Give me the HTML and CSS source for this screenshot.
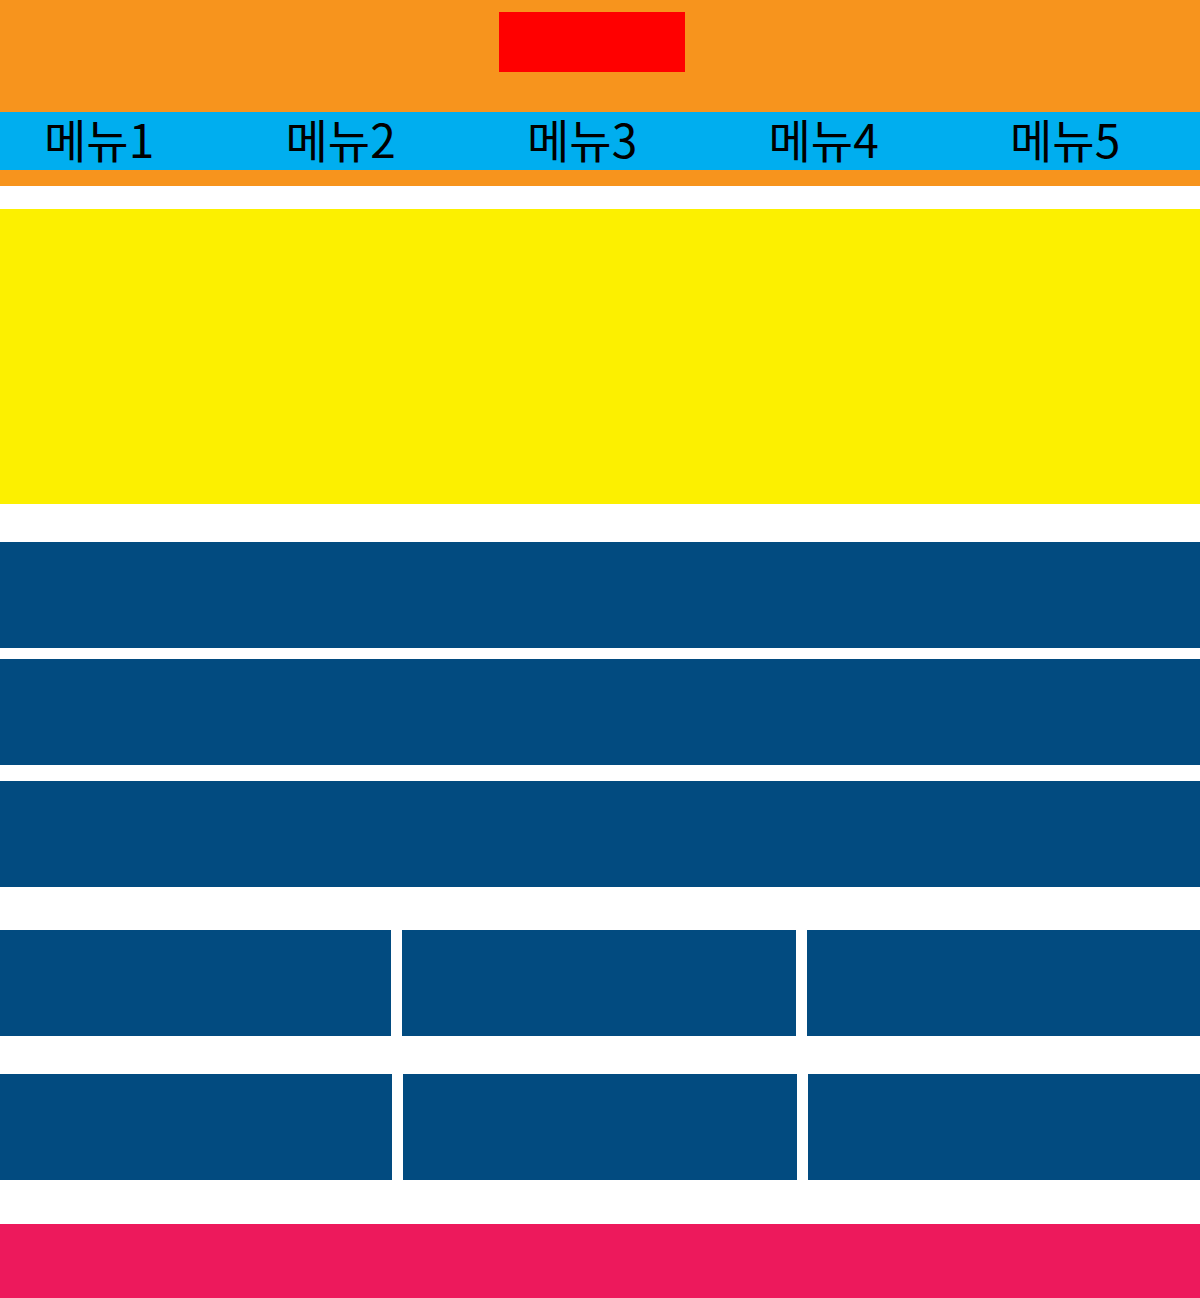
FILE: index.html
```html
<!DOCTYPE html>
<html lang="ko">
<head>
<meta charset="utf-8">
<title>Layout</title>
<link rel="stylesheet" href="styles.css">
</head>
<body>
<header class="site-header">
  <div class="logo"></div>
  <nav class="gnb">
    <ul class="gnb-list">
      <li class="gnb-item">메뉴1</li>
      <li class="gnb-item">메뉴2</li>
      <li class="gnb-item">메뉴3</li>
      <li class="gnb-item">메뉴4</li>
      <li class="gnb-item">메뉴5</li>
    </ul>
  </nav>
</header>
<main class="content">
  <section class="visual"></section>
  <section class="bars">
    <div class="bar bar-1"></div>
    <div class="bar bar-2"></div>
    <div class="bar bar-3"></div>
  </section>
  <section class="cards">
    <div class="card-row">
      <div class="card"></div>
      <div class="card"></div>
      <div class="card"></div>
    </div>
    <div class="card-row card-row-2">
      <div class="card"></div>
      <div class="card"></div>
      <div class="card"></div>
    </div>
  </section>
</main>
<footer class="site-footer"></footer>
</body>
</html>
```
FILE: styles.css
```css
html, body {
  margin: 0;
  padding: 0;
  background: #ffffff;
}
body {
  font-family: "Noto Sans CJK KR", "Noto Sans", sans-serif;
  width: 1200px;
}
.site-header {
  background: #f7941d;
  padding-top: 12px;
  padding-bottom: 16px;
}
.logo {
  width: 186px;
  height: 60px;
  margin-left: 499px;
  background: #ff0000;
}
.gnb {
  margin-top: 40px;
  background: #00aeef;
  height: 58px;
}
.gnb-list {
  list-style: none;
  margin: 0;
  padding: 0 0 0 44px;
  display: flex;
  height: 58px;
}
.gnb-item {
  flex: 0 0 241.5px;
  font-size: 46px;
  line-height: 52px;
  padding-bottom: 6px;
  color: #000000;
}
.content {
  display: flex;
  flex-direction: column;
}
.visual {
  margin-top: 23px;
  height: 295px;
  background: #fcf000;
}
.bars {
  margin-top: 38px;
  display: flex;
  flex-direction: column;
}
.bar {
  height: 106px;
  background: #024b80;
}
.bar-2 { margin-top: 11px; }
.bar-3 { margin-top: 16px; }
.cards {
  margin-top: 43px;
  display: flex;
  flex-direction: column;
  gap: 38px;
}
.card-row {
  display: grid;
  grid-template-columns: 391px 394px 393px;
  column-gap: 11px;
}
.card-row-2 {
  grid-template-columns: 392px 394px 392px;
}
.card {
  height: 106px;
  background: #024b80;
}
.site-footer {
  margin-top: 44px;
  height: 74px;
  background: #ed195c;
}
```
